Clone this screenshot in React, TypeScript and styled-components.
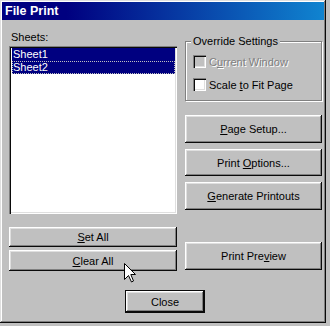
import { createGlobalStyle, styled } from 'styled-components';

const GlobalStyle = createGlobalStyle`
  html, body {
    margin: 0;
    padding: 0;
    background: #c0c0c0;
  }
  body {
    font-family: 'Liberation Sans', Arial, sans-serif;
    font-size: 11px;
    color: #000;
  }
`;

const Window = styled.div`
  position: relative;
  box-sizing: border-box;
  width: 326px;
  height: 323px;
  padding: 2px;
  background: #c0c0c0;
  box-shadow: inset -1px -1px #0a0a0a, inset 1px 1px #dfdfdf,
    inset -2px -2px #808080, inset 2px 2px #ffffff;
  display: flex;
  flex-direction: column;
`;

const TitleBar = styled.div`
  height: 18px;
  display: flex;
  align-items: center;
  padding-left: 3px;
  background: linear-gradient(90deg, #000080 20%, #1084d0);
  color: #fff;
  font-weight: bold;
  font-size: 12.5px;
`;

const Content = styled.div`
  display: grid;
  grid-template-columns: 168px 137px;
  column-gap: 8px;
  padding: 11px 0 0 7px;
`;

const Column = styled.div<{ $top?: number }>`
  display: flex;
  flex-direction: column;
  padding-top: ${({ $top }) => $top ?? 0}px;
`;

const Label = styled.div`
  height: 13px;
  line-height: 13px;
  padding-left: 2px;
  margin-bottom: 2px;
`;

const ListBox = styled.div`
  box-sizing: border-box;
  height: 168px;
  padding: 2px 2px 2px 3px;
  background: #fff;
  box-shadow: inset 1px 1px #808080, inset 2px 2px #0a0a0a,
    inset -1px -1px #ffffff, inset -2px -2px #dfdfdf;
`;

const ListItem = styled.div<{ $focus?: boolean }>`
  box-sizing: border-box;
  height: 13px;
  line-height: 12px;
  padding-left: 1px;
  background: #000080;
  color: #fff;
  outline: ${({ $focus }) => ($focus ? '1px dotted #c0c0c0' : 'none')};
  outline-offset: -1px;
`;

const Button = styled.button<{ $h: number; $mt?: number; $default?: boolean }>`
  box-sizing: border-box;
  width: 100%;
  height: ${({ $h }) => $h}px;
  margin-top: ${({ $mt }) => $mt ?? 0}px;
  padding: 0;
  border: none;
  background: #c0c0c0;
  font-family: 'Liberation Sans', Arial, sans-serif;
  font-size: 11px;
  color: #000;
  box-shadow: ${({ $default }) =>
    $default
      ? 'inset 0 0 0 1px #0a0a0a, inset -2px -2px #0a0a0a, inset 2px 2px #ffffff, inset -3px -3px #808080, inset 3px 3px #dfdfdf'
      : 'inset -1px -1px #0a0a0a, inset 1px 1px #ffffff, inset -2px -2px #808080, inset 2px 2px #dfdfdf'};

  u {
    text-decoration: underline;
    text-underline-offset: 1px;
  }
`;

const Group = styled.div`
  position: relative;
  box-sizing: border-box;
  height: 60px;
  margin-top: 6px;
  padding: 13px 0 0 7px;
  border: 1px solid #808080;
  box-shadow: inset 1px 1px #ffffff, 1px 1px #ffffff;
  display: flex;
  flex-direction: column;
  gap: 10px;
`;

const Legend = styled.span`
  position: absolute;
  top: -7px;
  left: 5px;
  padding: 0 2px;
  line-height: 13px;
  background: #c0c0c0;
`;

const CheckRow = styled.div<{ $disabled?: boolean }>`
  display: flex;
  align-items: center;
  gap: 3px;
  height: 13px;
  color: ${({ $disabled }) => ($disabled ? '#808080' : '#000')};
  text-shadow: ${({ $disabled }) => ($disabled ? '1px 1px #ffffff' : 'none')};
`;

const CheckBox = styled.span<{ $disabled?: boolean }>`
  box-sizing: border-box;
  width: 13px;
  height: 13px;
  background: ${({ $disabled }) => ($disabled ? '#c0c0c0' : '#fff')};
  box-shadow: inset 1px 1px #808080, inset 2px 2px #0a0a0a,
    inset -1px -1px #ffffff, inset -2px -2px #dfdfdf;
`;

const Footer = styled.div`
  display: flex;
  justify-content: center;
  padding: 19px 0 0 4px;
`;

const CloseWrap = styled.div`
  width: 80px;
`;

const Cursor = styled.svg`
  position: absolute;
  left: 124px;
  top: 263px;
`;

export default function App() {
  return (
    <>
      <GlobalStyle />
      <Window>
        <TitleBar>File Print</TitleBar>
        <Content>
          <Column>
            <Label>Sheets:</Label>
            <ListBox>
              <ListItem>Sheet1</ListItem>
              <ListItem $focus>Sheet2</ListItem>
            </ListBox>
            <Button $h={20} $mt={13}>
              <u>S</u>et All
            </Button>
            <Button $h={21} $mt={3}>
              <u>C</u>lear All
            </Button>
          </Column>
          <Column $top={4}>
            <Group>
              <Legend>Override Settings</Legend>
              <CheckRow $disabled>
                <CheckBox $disabled />
                <span>
                  C<u>u</u>rrent Window
                </span>
              </CheckRow>
              <CheckRow>
                <CheckBox />
                <span>
                  Scale <u>t</u>o Fit Page
                </span>
              </CheckRow>
            </Group>
            <Button $h={28} $mt={14}>
              <u>P</u>age Setup...
            </Button>
            <Button $h={27} $mt={6}>
              Print <u>O</u>ptions...
            </Button>
            <Button $h={28} $mt={6}>
              <u>G</u>enerate Printouts
            </Button>
            <Button $h={28} $mt={32}>
              Print Pre<u>v</u>iew
            </Button>
          </Column>
        </Content>
        <Footer>
          <CloseWrap>
            <Button $h={23} $default>
              Close
            </Button>
          </CloseWrap>
        </Footer>
        <Cursor width="13" height="20" viewBox="0 0 13 20">
          <path
            d="M0.5 0.5 L0.5 16.5 L4.5 12.5 L7.5 19 L9.5 18 L6.8 11.5 L11.5 11.5 Z"
            fill="#fff"
            stroke="#000"
            strokeWidth="1"
          />
        </Cursor>
      </Window>
    </>
  );
}
